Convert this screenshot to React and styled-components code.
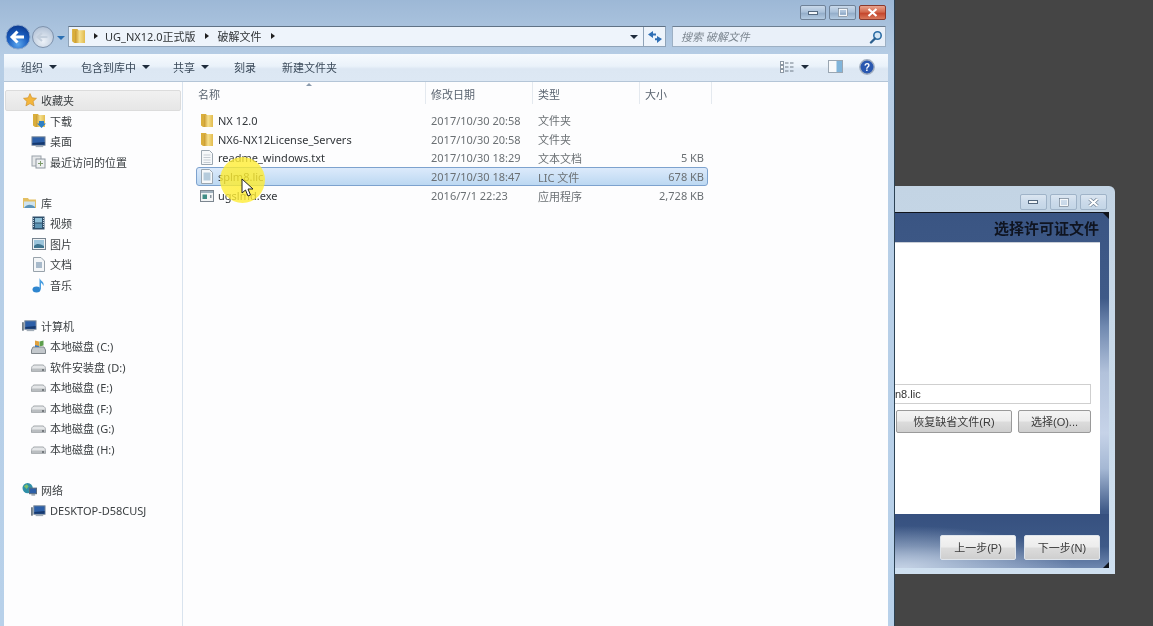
import styled, { createGlobalStyle } from "styled-components";

const GlobalStyle = createGlobalStyle`
  html, body {
    margin: 0;
    height: 100%;
    background: #454545;
    overflow: hidden;
  }
  #root {
    height: 100%;
  }
  * {
    box-sizing: border-box;
  }
`;

const FONT = `"Noto Sans", "Noto Sans CJK SC", sans-serif`;

const Desktop = styled.div`
  position: relative;
  width: 1153px;
  height: 626px;
  overflow: hidden;
  background: #454545;
  font-family: ${FONT};
  font-size: 11px;
  color: #3f4347;
  filter: blur(0.35px);
`;

/* explorer window */
const Explorer = styled.div`
  position: absolute;
  left: 0;
  top: 0;
  width: 895px;
  height: 626px;
  display: flex;
  flex-direction: column;
  padding: 0 6px 0 4px;
  background: linear-gradient(180deg, #9db8d6 0%, #b6cde5 9%, #b8d1ea 100%);
  border-right: 1px solid #2c4254;
`;

const TitleBar = styled.div`
  height: 26px;
  display: flex;
  justify-content: flex-end;
  align-items: flex-start;
  gap: 3px;
  padding: 5px 2px 0 0;
`;

const CtlBtn = styled.div`
  width: ${(p) => p.$w}px;
  height: ${(p) => p.$h}px;
  display: flex;
  align-items: center;
  justify-content: center;
  border: 1px solid ${(p) => (p.$close ? "#8a3a2e" : p.$pale ? "#9fb3c8" : "#6f8298")};
  border-radius: 2px;
  background: ${(p) =>
    p.$close
      ? "linear-gradient(180deg, #e9a48f 0%, #d2664a 48%, #c4452c 55%, #d9795b 100%)"
      : p.$pale
        ? "linear-gradient(180deg, #dbe6f1 0%, #cbdaea 50%, #c3d5e6 100%)"
        : "linear-gradient(180deg, #c9d9ea 0%, #a9c0d9 48%, #93adc9 55%, #b4cbe2 100%)"};
`;

const AddressRow = styled.div`
  height: 28px;
  display: flex;
  align-items: flex-start;
  padding-right: 2px;
`;

const NavCluster = styled.div`
  width: 64px;
  height: 26px;
  flex: none;
  margin-top: -2px;
`;

const AddressBar = styled.div`
  width: 598px;
  height: 21px;
  flex: none;
  display: flex;
  align-items: center;
  background: #eef4fb;
  border: 1px solid #8fa3b8;
  border-top-color: #5f7184;
  font-size: 11px;
  color: #2f3336;
`;

const Crumb = styled.span`
  display: inline-flex;
  align-items: center;
  gap: ${(p) => p.$gap || 7}px;
  margin-left: ${(p) => p.$ml}px;
  padding-bottom: 2px;
`;

const Caret = styled.span`
  display: inline-block;
  width: 0;
  height: 0;
  border-top: 3px solid transparent;
  border-bottom: 3px solid transparent;
  border-left: 4px solid #1f1f1f;
`;

const DownCaret = styled.span`
  display: inline-block;
  width: 0;
  height: 0;
  margin-left: ${(p) => p.$ml || 0}px;
  border-left: 4px solid transparent;
  border-right: 4px solid transparent;
  border-top: 4px solid ${(p) => p.$c || "#1f2c3c"};
`;

const AddressEnd = styled.div`
  margin-left: auto;
  display: flex;
  align-items: center;
  height: 100%;
`;

const RefreshBox = styled.div`
  width: 22px;
  height: 100%;
  margin-left: 5px;
  display: flex;
  align-items: center;
  justify-content: center;
  border-left: 1px solid #8fa3b8;
`;

const SearchBox = styled.div`
  width: 214px;
  height: 21px;
  margin-left: 6px;
  flex: none;
  display: flex;
  align-items: center;
  justify-content: space-between;
  padding: 0 2px 0 8px;
  background: #e9f0f9;
  border: 1px solid #9db0c4;
  border-top-color: #6c7e91;
  font-style: italic;
  font-size: 11px;
  color: #7d8791;
`;

const SearchText = styled.span`
  padding-bottom: 2px;
`;

const Toolbar = styled.div`
  height: 28px;
  display: flex;
  align-items: center;
  padding: 0 13px 2px 17px;
  background: linear-gradient(180deg, #f6fafe 0%, #eaf2fa 45%, #dce7f3 55%, #dde8f4 100%);
  border-bottom: 1px solid #b4c5d7;
  color: #3b4a5a;
  font-size: 11px;
  flex: none;
`;

const ToolItem = styled.span`
  display: inline-flex;
  align-items: center;
  gap: 6px;
  width: ${(p) => p.$w}px;
  flex: none;
`;

const ToolRight = styled.div`
  margin-left: auto;
  display: flex;
  align-items: center;
`;

const ToolGap = styled.span`
  width: ${(p) => p.$w}px;
`;

const Body = styled.div`
  flex: 1;
  display: flex;
  min-height: 0;
  background: #fdfdfe;
`;

const Sidebar = styled.div`
  width: 179px;
  flex: none;
  padding: 8px 1px 0 1px;
  border-right: 1px solid #d9e3ee;
  display: flex;
  flex-direction: column;
`;

const NavGroup = styled.div`
  margin-bottom: 20.5px;
`;

const NavRow = styled.div`
  height: 20.5px;
  display: flex;
  align-items: center;
  gap: 4px;
  padding-left: ${(p) => (p.$head ? 17 : 26)}px;
  font-size: 11px;
  color: #3c4043;
  white-space: nowrap;
  ${(p) =>
    p.$active &&
    `
    background: linear-gradient(180deg, #f1f1f1, #e6e6e6);
    border: 1px solid #dcdcdc;
    border-radius: 2px;
    padding-left: 16px;
  `}
`;

const IconSlot = styled.span`
  width: 15px;
  flex: none;
  display: flex;
  align-items: center;
  justify-content: center;
`;

const Files = styled.div`
  flex: 1;
  min-width: 0;
  display: flex;
  flex-direction: column;
`;

const HeaderRow = styled.div`
  position: relative;
  height: 22px;
  display: grid;
  grid-template-columns: 243px 107px 107px 72px;
  color: #5a6470;
  font-size: 11px;
  flex: none;
`;

const HeaderCell = styled.div`
  display: flex;
  align-items: center;
  padding: 2px 0 0 ${(p) => (p.$first ? 15 : 5)}px;
  border-right: 1px solid #e4e9ef;
`;

const SortArrow = styled.span`
  position: absolute;
  left: 123px;
  top: 1px;
  width: 0;
  height: 0;
  border-left: 3px solid transparent;
  border-right: 3px solid transparent;
  border-bottom: 3px solid #8a9aac;
`;

const FileList = styled.div`
  padding: 7px 0 0 13px;
  display: flex;
  flex-direction: column;
`;

const FileRow = styled.div`
  position: relative;
  width: 512px;
  height: 18.8px;
  display: grid;
  grid-template-columns: 234px 107px 107px 59px;
  align-items: center;
  border: 1px solid ${(p) => (p.$selected ? "#7da2ce" : "transparent")};
  border-radius: 3px;
  background: ${(p) =>
    p.$selected ? "linear-gradient(180deg, #dceafb 0%, #bcd8f2 100%)" : "transparent"};
  font-size: 11px;
  color: #6b7074;
`;

const NameCell = styled.div`
  display: flex;
  align-items: center;
  gap: 4px;
  color: #33373b;
  padding-left: 3px;
`;

const SizeCell = styled.div`
  text-align: right;
`;

const Spotlight = styled.div`
  position: absolute;
  left: 220px;
  top: 157px;
  width: 45px;
  height: 46px;
  border-radius: 50%;
  background: radial-gradient(circle, rgba(255, 238, 40, 0.8) 0%, rgba(255, 236, 50, 0.78) 72%, rgba(255, 240, 90, 0.45) 100%);
`;

const Pointer = styled.svg`
  position: absolute;
  left: 241px;
  top: 178px;
`;

/* the wizard window behind */
const Wizard = styled.div`
  position: absolute;
  left: 870px;
  top: 186px;
  width: 245px;
  height: 388px;
  display: flex;
  flex-direction: column;
  padding: 0 6px 6px 0;
  background: linear-gradient(180deg, #c3d4e4 0%, #cfe0f0 100%);
  border-top-right-radius: 6px;
`;

const WizardBar = styled.div`
  height: 26px;
  flex: none;
  display: flex;
  justify-content: flex-end;
  gap: 3px;
  padding: 8px 2px 0 0;
`;

const WizardPanel = styled.div`
  position: relative;
  flex: 1;
  display: flex;
  flex-direction: column;
  border-top: 1px solid #10141c;
  background: linear-gradient(180deg, #3a5583 0%, #3f5a88 24%, #7089b0 32%, #b2c2db 45%, #c6d3e8 62%, #a5b8d4 72%, #3f5a88 84%, #36507f 100%);
`;

const CornerNotch = styled.span`
  position: absolute;
  right: 0;
  ${(p) => (p.$bottom ? "bottom: 0;" : "top: 0;")}
  width: 0;
  height: 0;
  border-left: 6px solid transparent;
  ${(p) => (p.$bottom ? "border-bottom: 6px solid #10141c;" : "border-top: 6px solid #10141c;")}
`;

const WizardTitle = styled.div`
  height: 29px;
  flex: none;
  display: flex;
  align-items: center;
  justify-content: flex-end;
  padding-right: 10px;
  font-family: "Liberation Serif", "Noto Sans CJK SC", serif;
  font-size: 15px;
  font-weight: 700;
  color: #0f1420;
`;

const WizardBody = styled.div`
  height: 272px;
  margin-right: 9px;
  flex: none;
  background: #fff;
  border-top: 1px solid #c9ced6;
  padding: 141px 9px 0 25px;
  display: flex;
  flex-direction: column;
  gap: 6px;
`;

const PathInput = styled.div`
  height: 20px;
  display: flex;
  align-items: center;
  border: 1px solid #cfcfcf;
  border-left: none;
  font-family: "Liberation Sans", sans-serif;
  font-size: 11px;
  color: #333;
`;

const ButtonRow = styled.div`
  display: flex;
  justify-content: flex-end;
  gap: 6px;
`;

const WinButton = styled.div`
  width: ${(p) => p.$w}px;
  height: ${(p) => p.$h}px;
  display: flex;
  align-items: center;
  justify-content: center;
  padding-bottom: 2px;
  border: 1px solid ${(p) => (p.$light ? "#dfe5ec" : "#9a9a9a")};
  border-radius: 2px;
  background: linear-gradient(180deg, #f4f4f4 0%, #ececec 48%, #dcdcdc 52%, #cfcfcf 100%);
  font-family: "Liberation Sans", "Noto Sans CJK SC", sans-serif;
  font-size: 11px;
  color: #3a3a3a;
`;

const WizardFooter = styled.div`
  flex: 1;
  display: flex;
  align-items: flex-end;
  justify-content: flex-end;
  gap: 8px;
  padding: 0 9px 8px 0;
  background: radial-gradient(ellipse 170px 42px at 14% 100%, #c3d1e4 0%, rgba(195, 209, 228, 0) 100%),
    linear-gradient(180deg, #36507f 0%, #3e5a88 60%, #6f88b0 100%);
`;

const Folder = ({ size = 14, arrow }) => (
  <svg width={size} height={size + 1} viewBox="0 0 14 15">
    <defs>
      <linearGradient id="folderFace" x1="0" x2="1" y1="0" y2="0">
        <stop offset="0%" stopColor="#c9982c" />
        <stop offset="45%" stopColor="#f6e08d" />
        <stop offset="100%" stopColor="#e2bb4e" />
      </linearGradient>
    </defs>
    <path d="M1 1h5l1 1.500h6V14H3L1 12.500z" fill="#d9ae3c" />
    <path d="M4 2.500l9-.5V14H4z" fill="url(#folderFace)" />
    {arrow && <path d="M7 8h5v2.500h2L9.500 15 5 10.500h2z" fill="#2f7fc4" />}
  </svg>
);

const Page = ({ lines = true }) => (
  <svg width="14" height="15" viewBox="0 0 14 15">
    <path d="M1.500.5h8l3 3v11h-11z" fill="#f6f8fa" stroke="#9ba6b0" />
    {lines && <path d="M3.500 5h7M3.500 7.500h7M3.500 10h7M3.500 12.500h7" stroke="#c5ccd3" />}
    {!lines && <rect x="3.500" y="3.500" width="7" height="8" fill="#b5cbdc" />}
  </svg>
);

const Exe = () => (
  <svg width="14" height="12" viewBox="0 0 14 12">
    <rect x=".5" y=".5" width="13" height="11" fill="#f2f4f5" stroke="#7c8690" />
    <rect x="1" y="1" width="12" height="2" fill="#9fb0bd" />
    <rect x="2.500" y="4.500" width="4.500" height="4.500" fill="#3f8c85" />
    <rect x="10" y="5" width="1.500" height="3" fill="#8a95a0" />
  </svg>
);

const Star = () => (
  <svg width="14" height="14" viewBox="0 0 14 14">
    <path d="M7 .6l1.900 4.200 4.600.5-3.400 3.100 1 4.500L7 10.600l-4.100 2.300 1-4.500L.5 5.300l4.600-.5z" fill="#f4b63c" stroke="#c98a22" strokeWidth=".6" />
  </svg>
);

const Monitor = ({ tower }) => (
  <svg width="16" height="13" viewBox="0 0 16 13">
    {tower && <rect x="0" y="3" width="2" height="9" fill="#6f7b86" />}
    <rect x={tower ? 3 : 1} y="1.500" width={tower ? 12 : 14} height="9" fill="#2c5fa8" stroke="#7c8a98" />
    <path d={tower ? "M3.500 8l11-1v3h-11z" : "M1.500 8l13-1v3h-13z"} fill="#16396e" />
    <rect x="5" y="11" width="8" height="1.500" fill="#a2adb8" />
  </svg>
);

const Recent = () => (
  <svg width="15" height="14" viewBox="0 0 15 14">
    <rect x="1" y="1" width="9" height="10" fill="#e6e8ea" stroke="#9aa2a9" />
    <rect x="5" y="4" width="9" height="9" fill="#eef0f2" stroke="#8d969e" />
    <path d="M7 8.500h5M9.500 6v5" stroke="#7d9a6a" />
  </svg>
);

const Library = () => (
  <svg width="15" height="14" viewBox="0 0 15 14">
    <path d="M1 2h5l1 1.500h7V12H1z" fill="#e3bf63" />
    <path d="M2 5.500h11V12H2z" fill="#cfe3ee" />
    <path d="M2 12c3-4 7-4 11-1v1z" fill="#5c93b8" />
  </svg>
);

const Video = () => (
  <svg width="13" height="14" viewBox="0 0 13 14">
    <rect x=".5" y=".5" width="12" height="13" fill="#2e4f6b" />
    <rect x="3" y="2" width="7" height="4.500" fill="#8fc0d8" />
    <rect x="3" y="7.500" width="7" height="4.500" fill="#5d94b4" />
    <path d="M1.500 2v10M11.500 2v10" stroke="#c9d6df" strokeDasharray="1 1" />
  </svg>
);

const Picture = () => (
  <svg width="14" height="12" viewBox="0 0 14 12">
    <rect x=".5" y=".5" width="13" height="11" fill="#eef2f5" stroke="#76838f" />
    <rect x="2" y="2" width="10" height="8" fill="#9cc5dc" />
    <path d="M2 8c3-3 6-2 10 0v2H2z" fill="#3f7590" />
  </svg>
);

const Doc = () => (
  <svg width="12" height="15" viewBox="0 0 12 15">
    <path d="M.5.5h7.500l3.500 3.500v10.500H.5z" fill="#f4f6f8" stroke="#98a2ab" />
    <path d="M3 6h6M3 8h6M3 10h6" stroke="#5c7e9e" />
  </svg>
);

const Music = () => (
  <svg width="13" height="16" viewBox="0 0 13 16">
    <ellipse cx="4.500" cy="12.500" rx="4" ry="3" fill="#2f86cf" />
    <path d="M7.500 12V1c1 3 5 3.500 4 8-1-2.500-2.500-3-2.500-3v6.500z" fill="#4a9ee0" />
  </svg>
);

const Drive = () => (
  <svg width="15" height="12" viewBox="0 0 15 12">
    <path d="M3 4h9c1.500.5 2.500 2 2.500 3.500v3H.5v-3C.5 6 1.500 4.500 3 4z" fill="#e4e6e8" stroke="#a2a7ab" />
    <rect x="1" y="7.500" width="13" height="3" fill="#b9bdc0" />
    <circle cx="12" cy="9" r="1" fill="#5e6367" />
  </svg>
);

const SystemDrive = () => (
  <svg width="15" height="15" viewBox="0 0 15 15">
    <path d="M2 8h11l1.500 3v3.500H.5V11z" fill="#c3c8cc" stroke="#7f868b" />
    <path d="M4 1.500l4 1v5l-4-1z" fill="#e2a13c" />
    <path d="M8.500 2.500l4-1v5l-4 1z" fill="#5d9e4c" />
    <path d="M4 6l4 1v1H4z" fill="#3f78bb" />
  </svg>
);

const Globe = () => (
  <svg width="16" height="15" viewBox="0 0 16 15">
    <circle cx="6" cy="6" r="5.500" fill="#2f8fa8" />
    <path d="M2 4l3-2 2 2-2 3zM7 8l3 1-2 2z" fill="#7fc06a" />
    <rect x="8" y="6" width="7.500" height="6" fill="#2c5fa8" stroke="#5a6a7a" />
    <rect x="10" y="12.500" width="4" height="1.500" fill="#8b98a5" />
  </svg>
);

const NavButtons = () => (
  <svg width="64" height="28" viewBox="0 0 64 28">
    <defs>
      <radialGradient id="back" cx="50%" cy="80%" r="75%">
        <stop offset="0%" stopColor="#5aa6ee" />
        <stop offset="55%" stopColor="#1c5fc0" />
        <stop offset="100%" stopColor="#0d3d94" />
      </radialGradient>
      <radialGradient id="fwd" cx="50%" cy="70%" r="70%">
        <stop offset="0%" stopColor="#eef3f9" />
        <stop offset="100%" stopColor="#b0c0d5" />
      </radialGradient>
    </defs>
    <circle cx="39" cy="13" r="10.500" fill="url(#fwd)" stroke="#7f93ad" />
    <path d="M33.500 13h10M38 9l-4.500 4 4.500 4" fill="none" stroke="#c3cfdd" strokeWidth="2" />
    <circle cx="14" cy="13" r="12" fill="url(#back)" stroke="#8ba7cc" />
    <path d="M8 13h12M13.500 7.500L8 13l5.500 5.500" fill="none" stroke="#fff" strokeWidth="3" />
    <path d="M53 12h8l-4 4z" fill="#2a6fb3" />
  </svg>
);

const RefreshIcon = () => (
  <svg width="16" height="14" viewBox="0 0 16 14">
    <path d="M6 1L1 4.500 6 8V5.500h3V3.500H6z" fill="#2f6fb5" />
    <path d="M10 13l5-4-5-3v2.200H8v2h2z" fill="#2f6fb5" />
  </svg>
);

const SearchIcon = () => (
  <svg width="14" height="14" viewBox="0 0 14 14">
    <circle cx="8.500" cy="5.500" r="3.700" fill="#d6e6f4" stroke="#2b6ca5" strokeWidth="1.600" />
    <path d="M6 8.500L2 12.500" stroke="#2b5f8e" strokeWidth="2.400" strokeLinecap="round" />
  </svg>
);

const ViewIcon = () => (
  <svg width="14" height="12" viewBox="0 0 14 12">
    <rect x=".5" y=".5" width="3" height="3" fill="#fff" stroke="#8d98a4" />
    <rect x=".5" y="4.500" width="3" height="3" fill="#fff" stroke="#8d98a4" />
    <rect x=".5" y="8.500" width="3" height="3" fill="#fff" stroke="#8d98a4" />
    <path d="M5 2h3.500M10 2h3.500M5 6h3.500M10 6h3.500M5 10h3.500M10 10h3.500" stroke="#6f7a86" />
  </svg>
);

const PaneIcon = () => (
  <svg width="15" height="13" viewBox="0 0 15 13">
    <rect x=".5" y=".5" width="14" height="12" fill="#f7f9fb" stroke="#9aa6b2" />
    <rect x="8.500" y="1" width="5.500" height="11" fill="#80b4da" />
  </svg>
);

const HelpIcon = () => (
  <svg width="16" height="16" viewBox="0 0 16 16">
    <circle cx="8" cy="8" r="7.200" fill="#2a58b0" stroke="#a3afbf" strokeWidth="1.400" />
    <text x="8" y="12" textAnchor="middle" fontSize="10" fontWeight="700" fill="#fff" fontFamily="Liberation Sans">?</text>
  </svg>
);

const MinGlyph = () => (
  <svg width="11" height="6" viewBox="0 0 11 6">
    <rect x=".5" y="1.500" width="9" height="3" fill="#f4f7fa" stroke="#54687e" />
  </svg>
);

const MaxGlyph = () => (
  <svg width="10" height="9" viewBox="0 0 10 9">
    <rect x="1" y="1" width="8" height="7" fill="none" stroke="#f4f7fa" strokeWidth="2" />
    <rect x=".5" y=".5" width="9" height="8" fill="none" stroke="#54687e" strokeWidth=".6" />
  </svg>
);

const CloseGlyph = ({ outline }) => (
  <svg width="11" height="9" viewBox="0 0 11 9">
    {outline && <path d="M1.500 1l8 7M9.500 1l-8 7" stroke="#6a7c90" strokeWidth="3.400" />}
    <path d="M1.500 1l8 7M9.500 1l-8 7" stroke="#fff" strokeWidth="2.200" />
  </svg>
);

const navGroups = [
  [
    { label: "收藏夹", icon: <Star />, head: true, active: true },
    { label: "下载", icon: <Folder arrow /> },
    { label: "桌面", icon: <Monitor /> },
    { label: "最近访问的位置", icon: <Recent /> },
  ],
  [
    { label: "库", icon: <Library />, head: true },
    { label: "视频", icon: <Video /> },
    { label: "图片", icon: <Picture /> },
    { label: "文档", icon: <Doc /> },
    { label: "音乐", icon: <Music /> },
  ],
  [
    { label: "计算机", icon: <Monitor tower />, head: true },
    { label: "本地磁盘 (C:)", icon: <SystemDrive /> },
    { label: "软件安装盘 (D:)", icon: <Drive /> },
    { label: "本地磁盘 (E:)", icon: <Drive /> },
    { label: "本地磁盘 (F:)", icon: <Drive /> },
    { label: "本地磁盘 (G:)", icon: <Drive /> },
    { label: "本地磁盘 (H:)", icon: <Drive /> },
  ],
  [
    { label: "网络", icon: <Globe />, head: true },
    { label: "DESKTOP-D58CUSJ", icon: <Monitor tower /> },
  ],
];

const files = [
  { name: "NX 12.0", date: "2017/10/30 20:58", type: "文件夹", size: "", icon: <Folder /> },
  { name: "NX6-NX12License_Servers", date: "2017/10/30 20:58", type: "文件夹", size: "", icon: <Folder /> },
  { name: "readme_windows.txt", date: "2017/10/30 18:29", type: "文本文档", size: "5 KB", icon: <Page /> },
  { name: "splm8.lic", date: "2017/10/30 18:47", type: "LIC 文件", size: "678 KB", icon: <Page lines={false} />, selected: true },
  { name: "ugslmd.exe", date: "2016/7/1 22:23", type: "应用程序", size: "2,728 KB", icon: <Exe /> },
];

const App = () => {
  return (
    <>
      <GlobalStyle />
      <Desktop>
        <Wizard>
          <WizardBar>
            <CtlBtn $w={27} $h={16} $pale><MinGlyph /></CtlBtn>
            <CtlBtn $w={27} $h={16} $pale><MaxGlyph /></CtlBtn>
            <CtlBtn $w={27} $h={16} $pale><CloseGlyph outline /></CtlBtn>
          </WizardBar>
          <WizardPanel>
            <CornerNotch />
            <WizardTitle>选择许可证文件</WizardTitle>
            <WizardBody>
              <PathInput>n8.lic</PathInput>
              <ButtonRow>
                <WinButton $w={116} $h={23}>恢复缺省文件(R)</WinButton>
                <WinButton $w={73} $h={23}>选择(O)...</WinButton>
              </ButtonRow>
            </WizardBody>
            <WizardFooter>
              <WinButton $w={76} $h={25} $light>上一步(P)</WinButton>
              <WinButton $w={76} $h={25} $light>下一步(N)</WinButton>
            </WizardFooter>
            <CornerNotch $bottom />
          </WizardPanel>
        </Wizard>

        <Explorer>
          <TitleBar>
            <CtlBtn $w={26} $h={15}><MinGlyph /></CtlBtn>
            <CtlBtn $w={27} $h={15}><MaxGlyph /></CtlBtn>
            <CtlBtn $w={27} $h={15} $close><CloseGlyph /></CtlBtn>
          </TitleBar>
          <AddressRow>
            <NavCluster><NavButtons /></NavCluster>
            <AddressBar>
              <Crumb $ml={2}><Folder size={15} /></Crumb>
              <Crumb $ml={8}><Caret />UG_NX12.0正式版</Crumb>
              <Crumb $ml={9} $gap={9}><Caret />破解文件</Crumb>
              <Crumb $ml={9}><Caret /></Crumb>
              <AddressEnd>
                <DownCaret />
                <RefreshBox><RefreshIcon /></RefreshBox>
              </AddressEnd>
            </AddressBar>
            <SearchBox>
              <SearchText>搜索 破解文件</SearchText>
              <SearchIcon />
            </SearchBox>
          </AddressRow>
          <Toolbar>
            <ToolItem $w={60}>组织<DownCaret /></ToolItem>
            <ToolItem $w={92}>包含到库中<DownCaret /></ToolItem>
            <ToolItem $w={61}>共享<DownCaret /></ToolItem>
            <ToolItem $w={48}>刻录</ToolItem>
            <ToolItem $w={70}>新建文件夹</ToolItem>
            <ToolRight>
              <ViewIcon />
              <DownCaret $ml={7} />
              <ToolGap $w={19} />
              <PaneIcon />
              <ToolGap $w={16} />
              <HelpIcon />
            </ToolRight>
          </Toolbar>
          <Body>
            <Sidebar>
              {navGroups.map((group) => (
                <NavGroup key={group[0].label}>
                  {group.map((item) => (
                    <NavRow key={item.label} $head={item.head} $active={item.active}>
                      <IconSlot>{item.icon}</IconSlot>
                      {item.label}
                    </NavRow>
                  ))}
                </NavGroup>
              ))}
            </Sidebar>
            <Files>
              <HeaderRow>
                <HeaderCell $first>名称</HeaderCell>
                <HeaderCell>修改日期</HeaderCell>
                <HeaderCell>类型</HeaderCell>
                <HeaderCell>大小</HeaderCell>
                <SortArrow />
              </HeaderRow>
              <FileList>
                {files.map((f) => (
                  <FileRow key={f.name} $selected={f.selected}>
                    <NameCell>{f.icon}{f.name}</NameCell>
                    <div>{f.date}</div>
                    <div>{f.type}</div>
                    <SizeCell>{f.size}</SizeCell>
                  </FileRow>
                ))}
              </FileList>
            </Files>
          </Body>
        </Explorer>

        <Spotlight />
        <Pointer width="14" height="19" viewBox="0 0 14 19">
          <path d="M1 1v14l3.500-3 2.500 6 2.500-1-2.500-6H12z" fill="#fff" stroke="#222" />
        </Pointer>
      </Desktop>
    </>
  );
};

export default App;
